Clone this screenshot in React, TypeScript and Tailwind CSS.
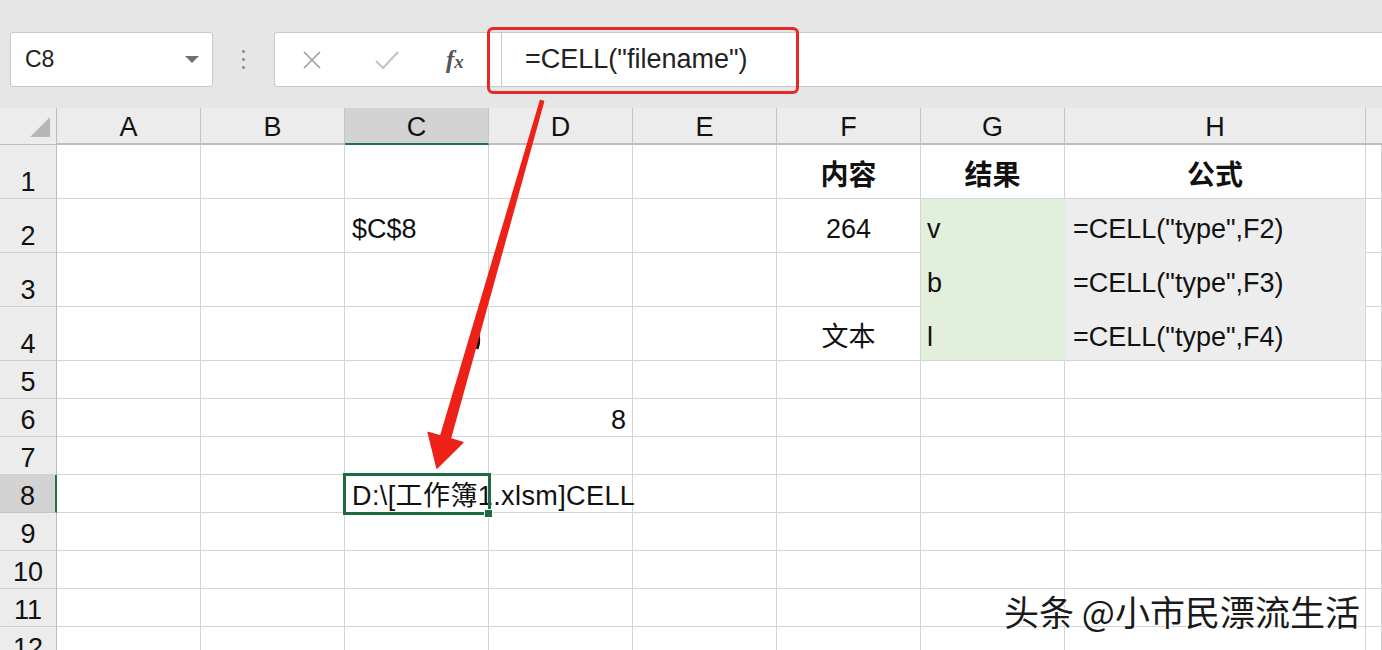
import clsx from 'clsx';

// Spreadsheet columns after the row-number gutter.
const COLS = ['A', 'B', 'C', 'D', 'E', 'F', 'G', 'H', ''];
const ROWS = [1, 2, 3, 4, 5, 6, 7, 8, 9, 10, 11, 12];

type Cell = {
  text: string;
  align?: 'left' | 'center' | 'right';
  bold?: boolean;
  fill?: 'green' | 'gray';
};

const CELLS: Record<string, Cell> = {
  C2: { text: '$C$8' },
  F1: { text: '内容', align: 'center', bold: true },
  G1: { text: '结果', align: 'center', bold: true },
  H1: { text: '公式', align: 'center', bold: true },
  F2: { text: '264', align: 'center' },
  G2: { text: 'v', fill: 'green' },
  H2: { text: '=CELL("type",F2)', fill: 'gray' },
  G3: { text: 'b', fill: 'green' },
  H3: { text: '=CELL("type",F3)', fill: 'gray' },
  F4: { text: '文本', align: 'center' },
  G4: { text: 'l', fill: 'green' },
  H4: { text: '=CELL("type",F4)', fill: 'gray' },
  D6: { text: '8', align: 'right' },
  C8: { text: 'D:\\[工作簿1.xlsm]CELL' },
};

function Toolbar() {
  return (
    <div className="relative h-[108px] bg-[#e6e6e6] flex items-start pt-[32px]">
      <div className="ml-[10px] w-[203px] h-[55px] bg-white border border-[#c9c9c9] rounded-[3px] flex items-center justify-between pl-[14px] pr-[13px]">
        <span className="text-[23px] text-[#222]">C8</span>
        <svg width="14" height="8" viewBox="0 0 14 8" aria-hidden="true">
          <path d="M0 0h14L7 7z" fill="#707070" />
        </svg>
      </div>
      <div className="w-[61px] h-[55px] flex flex-col items-center justify-center gap-[5px]">
        <span className="w-[3px] h-[3px] rounded-full bg-[#8a8a8a]" />
        <span className="w-[3px] h-[3px] rounded-full bg-[#8a8a8a]" />
        <span className="w-[3px] h-[3px] rounded-full bg-[#8a8a8a]" />
      </div>
      <div className="flex-1 h-[55px] bg-white border border-r-0 border-[#c9c9c9] rounded-l-[3px] flex">
        <div className="w-[226px] flex items-center">
          <svg className="ml-[27px]" width="20" height="18" viewBox="0 0 20 18" aria-hidden="true">
            <path d="M2 1l16 16M18 1L2 17" stroke="#9d9d9d" strokeWidth="1.6" fill="none" />
          </svg>
          <svg className="ml-[53px]" width="24" height="20" viewBox="0 0 24 20" aria-hidden="true">
            <path d="M1 11l7 7L23 2" stroke="#c2c2c2" strokeWidth="2" fill="none" />
          </svg>
          <span className="ml-[47px] font-['Liberation_Serif',serif] italic font-bold text-[25px] leading-none text-[#555]">
            f<span className="text-[19px]">x</span>
          </span>
        </div>
        <div className="flex-1 border-l border-[#c9c9c9] flex items-center pl-[23px]">
          <span className="text-[27px] text-[#222]">=CELL("filename")</span>
        </div>
      </div>
      {/* annotation highlight round the formula */}
      <div className="absolute left-[487px] top-[27px] w-[312px] h-[67px] border-[3px] border-[#e42a24] rounded-[6px]" />
    </div>
  );
}

function HeaderRow() {
  return (
    <>
      <div className="bg-[#ececec] border-r border-b border-[#bdbdbd] relative">
        <svg className="absolute left-[30px] top-[9px]" width="21" height="21" viewBox="0 0 21 21" aria-hidden="true">
          <path d="M0 20L20 0v20z" fill="#b7b7b7" />
        </svg>
      </div>
      {COLS.map((c, i) => (
        <div
          key={`h${i}`}
          className={clsx(
            'flex items-end justify-center border-b-2 text-[27px] leading-[31px] text-[#111]',
            c === 'C' ? 'bg-[#d3d3d3] border-[#217346]' : 'bg-[#ececec] border-b-[#bdbdbd]',
            c !== '' && 'border-r border-r-[#c4c4c4]',
          )}
        >
          {c}
        </div>
      ))}
    </>
  );
}

function GridCell({ col, row }: { col: string; row: number }) {
  const key = `${col}${row}`;
  const cell = CELLS[key];
  const tall = row <= 4;
  const selected = key === 'C8';
  return (
    <div
      className={clsx(
        'flex items-end border-r border-b whitespace-nowrap text-[27px] leading-[31px] text-[#111]',
        tall ? 'pb-[7px]' : 'pb-0',
        cell?.fill === 'green' && 'bg-[#e2efda]',
        cell?.fill === 'gray' && 'bg-[#ededed]',
        cell?.fill === 'green' && row < 4 ? 'border-r-[#e2efda] border-b-[#e2efda]' : '',
        cell?.fill === 'green' && row === 4 ? 'border-r-[#e2efda] border-b-[#d4d4d4]' : '',
        cell?.fill === 'gray' && row < 4 ? 'border-r-[#d4d4d4] border-b-[#ededed]' : '',
        !cell?.fill || (cell?.fill === 'gray' && row === 4) ? 'border-[#d4d4d4]' : '',
        cell?.align === 'center' && 'justify-center',
        cell?.align === 'right' && 'justify-end pr-[6px]',
        (!cell?.align || cell.align === 'left') && (col === 'H' ? 'pl-[8px]' : col === 'G' ? 'pl-[6px]' : 'pl-[7px]'),
        cell?.bold && 'font-bold text-[28px]',
        selected && 'relative',
      )}
    >
      {cell && <span className={clsx(selected && 'tracking-[0.4px]')}>{cell.text}</span>}
      {selected && (
        <>
          <div className="absolute -left-[2px] -top-[2px] w-[148px] h-[42px] border-[3px] border-[#1e6b41]" />
          <div className="absolute left-[139px] top-[34px] w-[9px] h-[9px] bg-[#1e6b41] border border-white" />
        </>
      )}
    </div>
  );
}

export default function App() {
  return (
    <div className="relative w-[1382px] h-[650px] overflow-hidden bg-white font-['Liberation_Sans','Noto_Sans_CJK_SC',sans-serif]">
      <Toolbar />
      <div className="grid grid-cols-[57px_repeat(7,144px)_301px_1fr] grid-rows-[37px_repeat(4,54px)_repeat(8,38px)]">
        <HeaderRow />
        {ROWS.map((r) => (
          <div key={`r${r}`} className="contents">
            <div
              className={clsx(
                'flex items-end justify-center border-b text-[27px] leading-[31px] text-[#111]',
                r === 8
                  ? 'bg-[#d3d3d3] border-r-2 border-r-[#217346] border-b-[#c4c4c4]'
                  : 'bg-[#ececec] border-r border-r-[#bdbdbd] border-b-[#d0d0d0]',
              )}
            >
              {r}
            </div>
            {COLS.map((c, i) => (
              <GridCell key={`${r}-${i}`} col={c || 'I'} row={r} />
            ))}
          </div>
        ))}
      </div>

      {/* red arrow from the formula to the result cell */}
      <svg className="absolute left-0 top-0 pointer-events-none" width="1382" height="650" viewBox="0 0 1382 650" aria-hidden="true">
        <path d="M476 330q5 9 1 19" stroke="#111" strokeWidth="3" fill="none" />
        <path
          d="M540.4 100.6L543.6 101.4L450.3 438.8L462.8 442.4L437 468L428.2 432.4L440.7 436Z"
          fill="#ee2119"
          stroke="#ee2119"
          strokeWidth="1.5"
          strokeLinejoin="round"
        />
      </svg>

      <div className="absolute left-[1004px] top-[590px] text-[35px] leading-[42px] text-[#1a1a1a] font-['Noto_Sans_CJK_SC',sans-serif] [text-shadow:1px_1px_1px_#fff,-1px_-1px_1px_#fff]">
        头条 @小市民漂流生活
      </div>
    </div>
  );
}
